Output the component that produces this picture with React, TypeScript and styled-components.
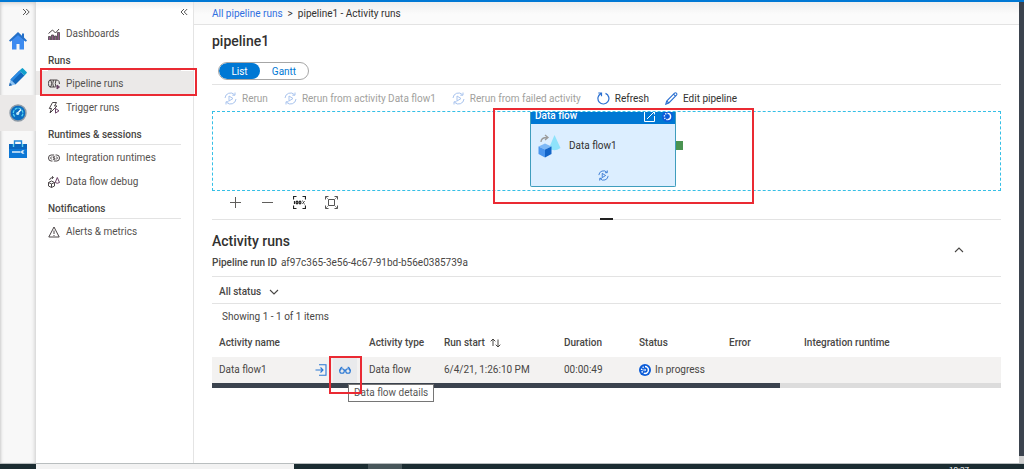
import React from 'react';
import styled, { createGlobalStyle, css } from 'styled-components';

const GlobalStyle = createGlobalStyle`
  *, *::before, *::after { box-sizing: border-box; }
  body {
    margin: 0;
    font-family: Roboto, 'Open Sans', sans-serif;
    font-size: 10px;
    line-height: 16px;
    color: #484644;
    background: #fff;
  }
  button, select, input { font: inherit; color: inherit; }
  svg { display: block; flex: none; }
`;

const line = '#e3e3e3';
const blue = '#0078d4';

const Shell = styled.div`
  display: flex;
  flex-direction: column;
  height: 100vh;
  overflow: hidden;
  border-top: 2px solid ${blue};
`;

const Workspace = styled.div`
  flex: 1;
  display: flex;
  min-height: 0;
`;

const PlainButton = styled.button`
  display: flex;
  align-items: center;
  justify-content: center;
  padding: 0;
  border: 0;
  background: none;
`;

const Rail = styled.nav`
  width: 36px;
  flex: none;
  background: #f8f8f8;
  box-shadow: inset 3px 0 3px -2px #ccc, inset -4px 0 4px -3px #ccc, inset 0 4px 5px -3px #ccc;
`;

const RailExpand = styled(PlainButton)`
  width: 36px;
  height: 21px;
  padding: 0 6px 2px 0;
  justify-content: flex-end;
`;

const RailButton = styled(PlainButton)<{ $active?: boolean }>`
  width: 36px;
  height: 36px;
  background: ${p => (p.$active ? '#ebe9e8' : 'none')};
`;

const Sidebar = styled.nav`
  width: 158px;
  flex: none;
  border-right: 1px solid #e4e4e4;
  background: linear-gradient(#f0f0f0, #fff 8px);
`;

const SidebarTop = styled.div`
  display: flex;
  justify-content: flex-end;
  height: 19px;
  padding: 0 5px 0 0;
`;

const NavHeading = styled.h2`
  margin: 0 12px;
  padding: 8px 0 1px;
  border-bottom: 1px solid ${line};
  font-size: 10px;
  line-height: 16px;
  font-weight: 500;
`;

const NavLink = styled.a<{ $active?: boolean }>`
  position: relative;
  display: flex;
  align-items: center;
  gap: 6px;
  height: 24px;
  padding: 1px 12px 0;
  color: #55524f;
  text-decoration: none;
  white-space: nowrap;
  background: ${p => (p.$active ? '#ebe9e8' : 'none')};
`;

const Callout = styled.span<{ $inset: string }>`
  position: absolute;
  inset: ${p => p.$inset};
  border: 2px solid #ea2a33;
  pointer-events: none;
  z-index: 3;
`;

const Main = styled.main`
  flex: 1;
  min-width: 0;
`;

const Breadcrumb = styled.nav`
  display: flex;
  gap: 5px;
  padding: 4px 18px 2px;
  border-bottom: 1px solid ${line};
  background: linear-gradient(#eeeeee, #fbfbfb 12px);
  color: #323130;
`;

const CrumbLink = styled.a`
  color: #2f6fe0;
  text-decoration: none;
`;

const Content = styled.div`
  padding: 0 18px;
`;

const Title = styled.h1`
  margin: 0;
  padding: 6px 0 11px;
  font-size: 14px;
  line-height: 20px;
  font-weight: 500;
  color: #323130;
`;

const Toggle = styled.div`
  display: inline-flex;
  height: 18px;
  margin-left: 6px;
  border: 1px solid #a6a6a6;
  border-radius: 9px;
  overflow: hidden;
  vertical-align: top;
`;

const ToggleButton = styled(PlainButton)<{ $on?: boolean; $width: number }>`
  width: ${p => p.$width}px;
  padding-top: 1px;
  border-radius: 9px;
  color: ${p => (p.$on ? '#fff' : blue)};
  background: ${p => (p.$on ? blue : 'none')};
`;

const Toolbar = styled.div`
  display: flex;
  gap: 16px;
  height: 27px;
  margin-top: 4px;
  padding: 1px 0 0 12px;
  border-top: 1px solid ${line};
`;

const ToolButton = styled(PlainButton)`
  gap: 5px;
  color: #323130;
  white-space: nowrap;
  &:disabled { color: #a19f9d; }
`;

const Canvas = styled.section`
  position: relative;
  height: 80px;
  border: 1px dashed #35bfe6;
`;

const CanvasClip = styled.div`
  height: 78px;
  overflow: hidden;
  display: flex;
  justify-content: center;
`;

const Node = styled.div`
  width: 146px;
  height: 75px;
  margin-right: 7px;
  border: 1px solid #3f9dbd;
  border-top: 0;
  border-radius: 0 0 2px 2px;
  background: #dceeff;
`;

const NodeHeader = styled.div`
  display: flex;
  align-items: center;
  gap: 7px;
  height: 12px;
  padding: 0 2px 4px 4px;
  background: ${blue};
  color: #fff;
  font-weight: 500;
  line-height: 12px;
`;

const Grow = styled.span`
  flex: 1;
`;

const NodeBody = styled.div`
  display: flex;
  align-items: center;
  gap: 8px;
  height: 44px;
  padding: 0 7px;
  color: #323130;
`;

const NodeFooter = styled.div`
  display: flex;
  justify-content: center;
  padding-top: 2px;
`;

const Port = styled.span`
  position: absolute;
  left: calc(50% + 69px);
  top: 29px;
  width: 7px;
  height: 9px;
  background: #4a9351;
`;

const Controls = styled.div`
  position: relative;
  display: flex;
  gap: 16px;
  height: 29px;
  padding: 0 0 5px 15px;
  border-bottom: 1px solid ${line};
`;

const ControlButton = styled(PlainButton)`
  width: 16px;
  color: #605e5c;
`;

const DragHandle = styled.span`
  position: absolute;
  left: 50%;
  bottom: -1px;
  width: 13px;
  height: 2px;
  margin-left: -7px;
  background: #222;
`;

const RunsHeader = styled.header`
  display: flex;
  align-items: center;
  justify-content: space-between;
  height: 56px;
  padding: 3px 37px 0 0;
`;

const RunsTitle = styled.h2`
  margin: 0;
  padding: 2px 0 4px;
  font-size: 14px;
  line-height: 20px;
  font-weight: 500;
  color: #323130;
`;

const RunId = styled.div`
  display: flex;
  gap: 4px;
  strong { font-weight: 500; }
`;

const Filter = styled.div`
  padding: 0 7px;
  border: 1px solid ${line};
  border-width: 1px 0;
`;

const FilterButton = styled(PlainButton)`
  gap: 8px;
  height: 26px;
  padding-top: 3px;
  font-weight: 500;
`;

const Count = styled.p`
  margin: 0;
  padding: 5px 10px 3px;
`;

const Table = styled.table`
  width: 100%;
  table-layout: fixed;
  border-collapse: collapse;
  white-space: nowrap;
  th, td { padding: 0 0 0 6px; text-align: left; }
  th { height: 29px; font-weight: 500; }
  td { height: 26px; background: #f3f2f1; }
  th:first-child, td:first-child { padding-left: 7px; }
`;

const Col = styled.col<{ $w?: number }>`
  ${p => p.$w && css`width: ${p.$w}px;`}
`;

const Inline = styled.div<{ $gap?: number }>`
  display: flex;
  align-items: center;
  gap: ${p => p.$gap ?? 4}px;
`;

const DetailSpot = styled.div`
  position: relative;
  display: flex;
  margin-right: 6px;
`;

const DetailButton = styled(PlainButton)`
  width: 24px;
  height: 25px;
  background: #e9eaec;
`;

const Tooltip = styled.span`
  position: absolute;
  left: 15px;
  top: 26px;
  padding: 0 5px;
  border: 1px solid #767676;
  background: #fff;
  color: #575757;
  z-index: 2;
`;

const ScrollTrack = styled.div`
  height: 5px;
  background: #dcdcdc;
`;

const ScrollThumb = styled.div`
  width: 72%;
  height: 5px;
  background: #3b434e;
`;

const PageScroll = styled.div`
  width: 5px;
  flex: none;
  padding-bottom: 7px;
  background: #d0d0d0;
`;

const PageThumb = styled.div`
  height: 100%;
  background: #3b434e;
`;

const Taskbar = styled.footer`
  display: flex;
  height: 6px;
  padding-left: 36px;
  border-top: 1px solid #b9bebf;
  background: #1b2c31;
  overflow: hidden;
`;

const TaskSearch = styled.div`
  width: 258px;
  background: #f2f2f2;
`;

const TaskApp = styled.div`
  width: 34px;
  margin-left: 74px;
  background: #48565a;
`;

const Clock = styled.time`
  margin-left: auto;
  padding-right: 55px;
  color: #fff;
  font-size: 8px;
  line-height: 12px;
`;

type IconProps = { size?: number; color?: string };

const Chevrons = ({ flip }: { flip?: boolean }) => (
  <svg width="8" height="8" viewBox="0 0 8 8" fill="none" stroke="#555" strokeWidth="1">
    {flip ? <path d="M4 1 1 4l3 3M7.2 1l-3 3 3 3" /> : <path d="m1 1 3 3-3 3M4.2 1l3 3-3 3" />}
  </svg>
);

const HomeIcon = () => (
  <svg width="18" height="18" viewBox="0 0 18 18">
    <path d="M3 8v9.500h4.500V12h3v5.500H15V8L9 2.500z" fill="#3d8bf0" />
    <path d="M9 0 0 8.500l1.200 1.300L3 8.600l6-5 6 5 1.800 1.200L18 8.500l-3-2.900V1.500h-2v2.300z" fill="#2470c9" />
    <path d="M9 3.200 3 8.500V11h12V8.500z" fill="#3d8bf0" />
  </svg>
);

const PencilSolid = () => (
  <svg width="18" height="18" viewBox="0 0 18 18">
    <path d="M0 18l1.500-6.500 5 5z" fill="#8cc4f5" />
    <path d="M1.500 11.500 10.500 2.500 15.500 7.500 6.500 16.500z" fill="#1268bd" />
    <path d="M1.500 11.500 10.500 2.500l1.700 1.700-9 9z" fill="#2b8ae2" />
    <path d="M10.500 2.500 12.700.4q.7-.6 1.400 0l3.500 3.500q.6.700 0 1.300L15.500 7.500z" fill="#12a0cc" />
    <path d="M0 18l.8-3.200 2.400 2.400z" fill="#1b62ae" />
  </svg>
);

const GaugeIcon = () => (
  <svg width="18" height="18" viewBox="0 0 18 18" fill="none">
    <circle cx="9" cy="9" r="8" fill="#0a6cc0" stroke="#8f9ba6" strokeWidth="1.400" />
    <path d="M5.800 12.500a4.800 4.800 0 1 1 6.600 0" stroke="#51d0f0" strokeWidth="1.300" strokeDasharray="3 .8" />
    <path d="m8.500 9.500 3.500-4" stroke="#fff" strokeWidth="1.300" />
    <circle cx="8.700" cy="9.500" r="1.600" fill="#bfeafa" />
  </svg>
);

const ToolboxIcon = () => (
  <svg width="18" height="18" viewBox="0 0 18 18" fill="none">
    <path d="M5.500 4.500V1h7v3.500" stroke="#2488d8" strokeWidth="1.400" />
    <path d="M0 4h18v14H0z" fill="#0d78d6" />
    <path d="M0 4h18v5H0z" fill="#0a66bd" />
    <path d="M4.500 4v3M13.500 4v3" stroke="#5fd4f2" strokeWidth="1.400" />
    <path d="M3 12h8.500" stroke="#d3e8f8" strokeWidth="1.600" />
    <path d="M15.500 10.200h-2.300l-1.700 1.800 1.700 1.800h2.300l-1.500-1.800z" fill="#d3e8f8" />
  </svg>
);

const navSvg = { width: 12, height: 12, viewBox: '0 0 12 12', fill: 'none', stroke: '#4a4446', strokeWidth: 1 };

const DashIcon = () => (
  <svg {...navSvg}>
    <path d="M1.500 12V8.500M4.500 12V7M7.500 12V8M10.500 12V4.500" strokeWidth="2" stroke="#8d5a87" />
    <path d="M.5 12V8.500h2V12M3.500 12V7h2v5M6.500 12V8h2v4M9.500 12V4.500h2V12" strokeWidth=".8" />
    <path d="M.5 5.500l4-3.500 3 3L11 1" />
  </svg>
);

const PipeIcon = () => (
  <svg {...navSvg}>
    <ellipse cx="2" cy="5.500" rx="1.500" ry="3.500" />
    <path d="M2 2h7.500q2 1 2 4M2 9h5.500M5.500 2q-1.500 3.500 0 7M8 2q-1.500 3.500 0 7" />
    <path d="m9 7 2.500 2L9 11z" stroke="#6a4266" fill="#6a4266" />
  </svg>
);

const TriggerIcon = () => (
  <svg {...navSvg}>
    <path d="M4.500.5h4l-2 3.500h2.500L2 11l1.500-4.500H1.300z" />
    <path d="m7.500 6.500 3.500 2.300-3.500 2.300z" stroke="#6a4266" />
  </svg>
);

const IntegrationIcon = () => (
  <svg {...navSvg}>
    <path d="M4.500 9H3.200a2.700 3 0 0 1 0-6h3M7.500 3h1.300a2.700 3 0 0 1 0 6h-3M3.800 4.500 2.500 6l1.300 1.500M8.200 4.500 9.500 6 8.200 7.500M7 4.800H5.300V6h1.500v1.300H5" />
  </svg>
);

const DebugIcon = () => (
  <svg {...navSvg}>
    <path d="M.5 6.500 3.500 5l3 1.500v3.500l-3 1.500-3-1.500zM.5 6.500l3 1.400 3-1.400M3.500 8v3.500M1.500 4q.5-2.500 3.500-2.500M4 .3l1.500 1.200L4 2.800" />
    <path d="M9.300 1.500 7.200 6.500q2 1.500 4.300 0z" stroke="#6a4266" />
  </svg>
);

const AlertIcon = () => (
  <svg {...navSvg}>
    <path d="M6 1 .8 11h10.400z" />
    <path d="M6 4.500v3.500M6 9v1" />
  </svg>
);

const RerunIcon = ({ size = 13, color = '#a9c4ee' }: IconProps) => (
  <svg width={size} height={size} viewBox="0 0 13 13" fill="none" stroke={color} strokeWidth="1">
    <path d="M1 6A5.500 5.500 0 0 1 10.500 2.700M12 7a5.500 5.500 0 0 1-9.500 3.300M11 .5v2.700H8.300M2 12.500V9.800h2.700" />
    <path d="m5 4 4 2.500L5 9z" />
  </svg>
);

const RefreshIcon = () => (
  <svg width="13" height="13" viewBox="0 0 13 13" fill="none" stroke="#2a6fd0" strokeWidth="1.200">
    <path d="M8.500 1.400a5.500 5.500 0 1 1-4.600.2M1.300 1h3.200v3.200" />
  </svg>
);

const PencilIcon = () => (
  <svg width="13" height="13" viewBox="0 0 13 13" fill="none" stroke="#2a6fd0" strokeWidth="1.100">
    <path d="M.8 12.200 1.700 9 9.500 1.200q1-.8 1.900 0 .9 1 .1 1.900L3.800 11zM8.500 2.200l2.200 2.200M1.700 9l2.100 2" />
  </svg>
);

const OpenIcon = () => (
  <svg width="11" height="11" viewBox="0 0 11 11" fill="none" stroke="#fff" strokeWidth="1">
    <path d="M6 .5H.5v10h10V5M3 8l7-7M7.500.5h3v3" />
  </svg>
);

const ProgressIcon = ({ size = 12 }: IconProps) => (
  <svg width={size} height={size} viewBox="0 0 12 12" fill="none">
    <circle cx="6" cy="6" r="6" fill="#0b5cd8" />
    <path d="M6 2.600a3.400 3.400 0 0 1 0 6.800" stroke="#fff" strokeWidth="1.500" />
    <path d="M6 9.400a3.400 3.400 0 0 1 0-6.800" stroke="#fff" strokeWidth="1.500" strokeDasharray="1.300 1.300" />
    {size > 11 && <path d="M3.500 6h3.200M5.500 4.800 6.700 6 5.500 7.200" stroke="#fff" strokeWidth=".8" />}
  </svg>
);

const DataFlowIcon = () => (
  <svg width="23" height="24" viewBox="0 0 23 24" fill="none">
    <path d="M16.500 1 11 14q5 4.500 11.500 0z" fill="#8fe3fb" />
    <path d="M3 8q0-4.500 6-4.500M7 1l3 2.500L7 6" stroke="#9b9b9b" strokeWidth="1.300" />
    <path d="m.5 12.500 6.500-3 6.500 3-6.500 3z" fill="#7db8f6" />
    <path d="M.5 12.500v7.500L7 23.500v-8z" fill="#4a95ee" />
    <path d="M13.500 12.500v7.500L7 23.500v-8z" fill="#1264c8" />
  </svg>
);

const corners = 'M.5 3.500v-3h3M9.500.5h3v3M12.500 9.500v3h-3M3.500 12.500h-3v-3';

const HundredIcon = () => (
  <svg width="13" height="13" viewBox="0 0 13 13" fill="none" stroke="#222" strokeWidth="1.200">
    <path d={corners} />
    <path d="M1.500 5v3" />
    <ellipse cx="4" cy="6.500" rx=".9" ry="1.300" />
    <ellipse cx="7" cy="6.500" rx=".9" ry="1.300" />
    <path d="m9.500 8 2-3M9.200 5h.8M11 8h.8" strokeWidth=".9" />
  </svg>
);

const FitIcon = () => (
  <svg width="13" height="13" viewBox="0 0 13 13" fill="none" stroke="#555" strokeWidth="1">
    <path d={corners} />
    <path d="M3.500 3.500h6v6h-6z" />
    <path d="m.5.5 3 3M12.500.5l-3 3M12.500 12.500l-3-3M.5 12.500l3-3" strokeWidth=".6" />
  </svg>
);

const SortIcon = () => (
  <svg width="11" height="10" viewBox="0 0 11 10" fill="none" stroke="#484644" strokeWidth="1">
    <path d="M3 8V1M.7 3.300 3 1l2.300 2.300M8 1.500v7.500M5.700 6.700 8 9l2.300-2.300" />
  </svg>
);

const InputIcon = () => (
  <svg width="12" height="12" viewBox="0 0 12 12" fill="none" stroke="#2a78d4" strokeWidth="1.100">
    <path d="M4 .8h7v10.400H4M.5 6H8M5.500 3.500 8 6 5.500 8.500" />
  </svg>
);

const GlassesIcon = () => (
  <svg width="12" height="8" viewBox="0 0 12 8" fill="none" stroke="#2a78d4" strokeWidth="1.100">
    <circle cx="3" cy="5" r="2.300" />
    <circle cx="9" cy="5" r="2.300" />
    <path d="M5 4.500q1-.8 2 0M.7 5l.9-3L3.300 1M11.300 5l-.9-3L8.700 1" />
  </svg>
);

const Chevron = ({ up }: { up?: boolean }) => (
  <svg width="10" height="6" viewBox="0 0 10 6" fill="none" stroke="#484644" strokeWidth="1.100">
    <path d={up ? 'M1 5l4-4 4 4' : 'M1 1l4 4 4-4'} />
  </svg>
);

export default function App() {
  return (
    <>
      <GlobalStyle />
      <Shell>
        <Workspace>
          <Rail aria-label="Hubs">
            <RailExpand aria-label="Expand"><Chevrons /></RailExpand>
            <RailButton aria-label="Home"><HomeIcon /></RailButton>
            <RailButton aria-label="Author"><PencilSolid /></RailButton>
            <RailButton aria-label="Monitor" $active><GaugeIcon /></RailButton>
            <RailButton aria-label="Manage"><ToolboxIcon /></RailButton>
          </Rail>
          <Sidebar aria-label="Monitor">
            <SidebarTop>
              <PlainButton aria-label="Collapse"><Chevrons flip /></PlainButton>
            </SidebarTop>
            <NavLink href="#dashboards"><DashIcon />Dashboards</NavLink>
            <NavHeading>Runs</NavHeading>
            <NavLink href="#pipeline-runs" $active>
              <PipeIcon />Pipeline runs
              <Callout $inset="-3px -4px -1px 4px" />
            </NavLink>
            <NavLink href="#trigger-runs"><TriggerIcon />Trigger runs</NavLink>
            <NavHeading>Runtimes &amp; sessions</NavHeading>
            <NavLink href="#integration"><IntegrationIcon />Integration runtimes</NavLink>
            <NavLink href="#debug"><DebugIcon />Data flow debug</NavLink>
            <NavHeading>Notifications</NavHeading>
            <NavLink href="#alerts"><AlertIcon />Alerts &amp; metrics</NavLink>
          </Sidebar>
          <Main>
            <Breadcrumb aria-label="Breadcrumb">
              <CrumbLink href="#all">All pipeline runs</CrumbLink>
              <span>&gt;</span>
              <span>pipeline1 - Activity runs</span>
            </Breadcrumb>
            <Content>
              <Title>pipeline1</Title>
              <Toggle>
                <ToggleButton $on $width={41}>List</ToggleButton>
                <ToggleButton $width={48}>Gantt</ToggleButton>
              </Toggle>
              <Toolbar>
                <ToolButton disabled><RerunIcon />Rerun</ToolButton>
                <ToolButton disabled><RerunIcon />Rerun from activity Data flow1</ToolButton>
                <ToolButton disabled><RerunIcon />Rerun from failed activity</ToolButton>
                <ToolButton><RefreshIcon />Refresh</ToolButton>
                <ToolButton><PencilIcon />Edit pipeline</ToolButton>
              </Toolbar>
              <Canvas aria-label="Pipeline canvas">
                <CanvasClip>
                  <Node>
                    <NodeHeader>
                      Data flow<Grow /><OpenIcon /><ProgressIcon size={11} />
                    </NodeHeader>
                    <NodeBody><DataFlowIcon />Data flow1</NodeBody>
                    <NodeFooter><RerunIcon size={11} color="#2a6fd0" /></NodeFooter>
                  </Node>
                </CanvasClip>
                <Port />
                <Callout $inset="-4px 246px -14px 280px" />
              </Canvas>
              <Controls>
                <ControlButton aria-label="Zoom in">
                  <svg width="11" height="11" viewBox="0 0 11 11" stroke="currentColor"><path d="M5.500 0v11M0 5.500h11" /></svg>
                </ControlButton>
                <ControlButton aria-label="Zoom out">
                  <svg width="11" height="11" viewBox="0 0 11 11" stroke="currentColor"><path d="M0 5.500h11" /></svg>
                </ControlButton>
                <ControlButton aria-label="Zoom to 100%"><HundredIcon /></ControlButton>
                <ControlButton aria-label="Zoom to fit"><FitIcon /></ControlButton>
                <DragHandle />
              </Controls>
              <RunsHeader>
                <div>
                  <RunsTitle>Activity runs</RunsTitle>
                  <RunId><strong>Pipeline run ID</strong><span>af97c365-3e56-4c67-91bd-b56e0385739a</span></RunId>
                </div>
                <PlainButton aria-label="Collapse"><Chevron up /></PlainButton>
              </RunsHeader>
              <Filter>
                <FilterButton>All status<Chevron /></FilterButton>
              </Filter>
              <Count>Showing 1 - 1 of 1 items</Count>
              <Table>
                <colgroup>
                  <Col $w={151} /><Col $w={75} /><Col $w={120} /><Col $w={75} /><Col $w={90} /><Col $w={75} /><Col />
                </colgroup>
                <thead>
                  <tr>
                    <th>Activity name</th>
                    <th>Activity type</th>
                    <th><Inline $gap={5}>Run start<SortIcon /></Inline></th>
                    <th>Duration</th>
                    <th>Status</th>
                    <th>Error</th>
                    <th>Integration runtime</th>
                  </tr>
                </thead>
                <tbody>
                  <tr>
                    <td>
                      <Inline $gap={6}>
                        Data flow1<Grow />
                        <PlainButton aria-label="Input"><InputIcon /></PlainButton>
                        <DetailSpot>
                          <DetailButton aria-label="Data flow details"><GlassesIcon /></DetailButton>
                          <Tooltip role="tooltip">Data flow details</Tooltip>
                          <Callout $inset="-2px -5px -11px -4px" />
                        </DetailSpot>
                      </Inline>
                    </td>
                    <td>Data flow</td>
                    <td>6/4/21, 1:26:10 PM</td>
                    <td>00:00:49</td>
                    <td><Inline><ProgressIcon />In progress</Inline></td>
                    <td />
                    <td />
                  </tr>
                </tbody>
              </Table>
              <ScrollTrack><ScrollThumb /></ScrollTrack>
            </Content>
          </Main>
          <PageScroll><PageThumb /></PageScroll>
        </Workspace>
        <Taskbar>
          <TaskSearch />
          <TaskApp />
          <Clock>10:27</Clock>
        </Taskbar>
      </Shell>
    </>
  );
}
